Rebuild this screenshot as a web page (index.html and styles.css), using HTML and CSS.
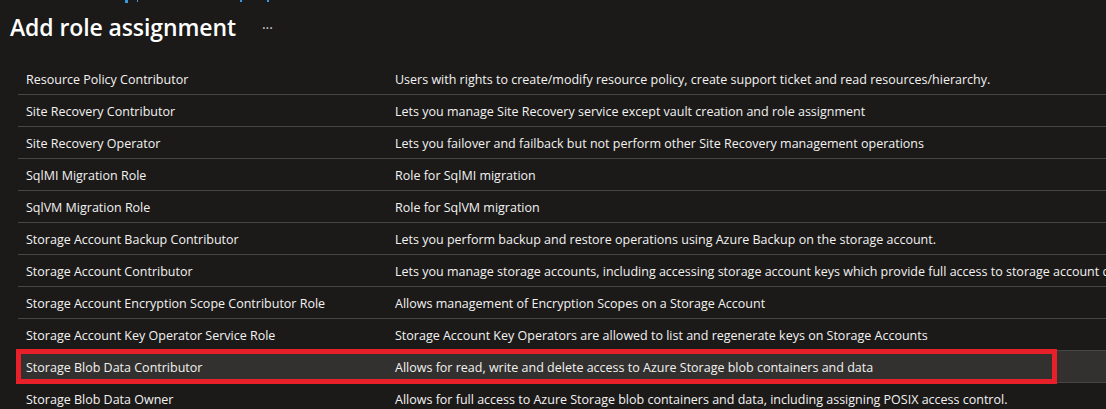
FILE: index.html
```html
<!DOCTYPE html>
<html lang="en">
<head>
<meta charset="utf-8">
<title>Add role assignment</title>
<link rel="stylesheet" href="styles.css">
</head>
<body>
<div class="page">
  <div class="crumbs">
    <span class="crumb c1"></span><span class="crumb c2"></span><span class="crumb c3"></span><span class="crumb c4"></span>
  </div>
  <header class="head">
    <h1 class="title">Add role assignment</h1>
    <span class="more">···</span>
  </header>
  <div class="table">
    <div class="row"><div class="name">Resource Policy Contributor</div><div class="desc">Users with rights to create/modify resource policy, create support ticket and read resources/hierarchy.</div></div>
    <div class="row"><div class="name">Site Recovery Contributor</div><div class="desc">Lets you manage Site Recovery service except vault creation and role assignment</div></div>
    <div class="row"><div class="name">Site Recovery Operator</div><div class="desc">Lets you failover and failback but not perform other Site Recovery management operations</div></div>
    <div class="row"><div class="name">SqlMI Migration Role</div><div class="desc">Role for SqlMI migration</div></div>
    <div class="row"><div class="name">SqlVM Migration Role</div><div class="desc">Role for SqlVM migration</div></div>
    <div class="row"><div class="name">Storage Account Backup Contributor</div><div class="desc">Lets you perform backup and restore operations using Azure Backup on the storage account.</div></div>
    <div class="row"><div class="name">Storage Account Contributor</div><div class="desc">Lets you manage storage accounts, including accessing storage account keys which provide full access to storage account data.</div></div>
    <div class="row"><div class="name">Storage Account Encryption Scope Contributor Role</div><div class="desc">Allows management of Encryption Scopes on a Storage Account</div></div>
    <div class="row"><div class="name">Storage Account Key Operator Service Role</div><div class="desc">Storage Account Key Operators are allowed to list and regenerate keys on Storage Accounts</div></div>
    <div class="row selected"><div class="name">Storage Blob Data Contributor</div><div class="desc">Allows for read, write and delete access to Azure Storage blob containers and data</div><span class="mark"></span></div>
    <div class="row"><div class="name">Storage Blob Data Owner</div><div class="desc">Allows for full access to Azure Storage blob containers and data, including assigning POSIX access control.</div></div>
  </div>
</div>
</body>
</html>
```

FILE: styles.css
```css
html, body {
  margin: 0;
  padding: 0;
  background: #1b1a19;
  overflow: hidden;
}
.page {
  width: 1106px;
  height: 409px;
  overflow: hidden;
  color: #f3f2f1;
  font-family: "Open Sans", "Noto Sans", sans-serif;
}
.crumbs {
  display: flex;
  height: 3px;
  overflow: hidden;
}
.crumb {
  display: block;
  height: 3px;
  background: #3a96dd;
}
.c1 { margin-left: 125px; width: 3px; }
.c2 { margin-left: 9px; width: 1px; height: 2px; }
.c3 { margin-left: 102px; width: 2px; height: 2px; }
.c4 { margin-left: 25px; width: 2px; height: 2px; }
.head {
  display: flex;
  align-items: center;
  height: 48px;
  padding-left: 10px;
}
.title {
  margin: 0;
  font-size: 23px;
  font-weight: 600;
  color: #ffffff;
  letter-spacing: -0.1px;
}
.more {
  margin-left: 26px;
  font-size: 14px;
  color: #d2d0ce;
}
.table {
  margin-top: 12px;
  margin-left: 18px;
  width: 1200px;
}
.row {
  position: relative;
  display: flex;
  box-sizing: border-box;
  height: 32px;
  padding-top: 2px;
  align-items: center;
  border-bottom: 1px solid #484644;
  font-size: 12.5px;
  white-space: nowrap;
}
.name {
  width: 361px;
  padding-left: 8px;
  flex: none;
}
.desc {
  padding-left: 8px;
}
.selected {
  background: #323130;
  border-top: 1px solid #484644;
  margin-top: -1px;
  height: 33px;
}
.mark {
  position: absolute;
  left: -2px;
  top: -2px;
  width: 1031px;
  height: 25px;
  border: 5px solid #e8202a;
}
```
